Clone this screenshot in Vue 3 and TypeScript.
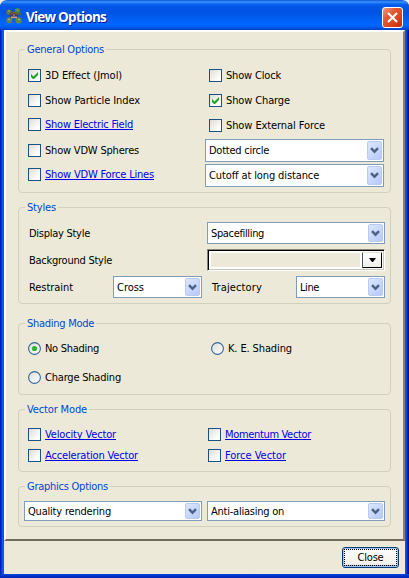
<script setup lang="ts">
import { reactive, ref } from 'vue'

interface Option {
  label: string
  width: number
  checked?: boolean
  link?: boolean
}

const generalLeft = reactive<Option[]>([
  { label: '3D Effect (Jmol)', width: 77, checked: true },
  { label: 'Show Particle Index', width: 95 },
  { label: 'Show Electric Field', width: 88, link: true },
  { label: 'Show VDW Spheres', width: 94 },
  { label: 'Show VDW Force Lines', width: 109, link: true },
])

const generalRight = reactive<Option[]>([
  { label: 'Show Clock', width: 55 },
  { label: 'Show Charge', width: 64, checked: true },
  { label: 'Show External Force', width: 99 },
])

const generalSelects = [
  { label: 'Dotted circle', width: 60 },
  { label: 'Cutoff at long distance', width: 110 },
]

const shading = ref('No Shading')
const shadingModes = [
  { label: 'No Shading', width: 54 },
  { label: 'K. E. Shading', width: 64 },
  { label: 'Charge Shading', width: 76 },
]

const vectors = reactive<Option[]>([
  { label: 'Velocity Vector', width: 71, link: true },
  { label: 'Momentum Vector', width: 86, link: true },
  { label: 'Acceleration Vector', width: 93, link: true },
  { label: 'Force Vector', width: 61, link: true },
])

const graphics = [
  { label: 'Quality rendering', width: 83 },
  { label: 'Anti-aliasing on', width: 73 },
]

// Tracks a label so that it fills the given number of pixels.
const vFit = {
  mounted(el: HTMLElement, binding: { value: number }) {
    const natural = el.getBoundingClientRect().width
    const count = (el.textContent ?? '').length
    if (count > 0) el.style.letterSpacing = `${(binding.value - natural) / count}px`
  },
}
</script>

<template>
  <div class="window">
    <header class="titlebar">
      <svg class="app-icon" width="16" height="16" viewBox="0 0 16 16">
        <path d="M3 3L13 12M13 3L3 12" stroke="#496b37" stroke-width="3.5" />
        <circle cx="2.8" cy="4.2" r="2.6" fill="#67763c" />
        <circle cx="11.5" cy="2.7" r="2.7" fill="#4e8a3c" />
        <circle cx="3.3" cy="12.2" r="2.9" fill="#668842" />
        <circle cx="12.6" cy="12.4" r="3.1" fill="#648b45" />
        <circle cx="14" cy="6" r="1.8" fill="#376c42" />
        <path d="M3.5 8.5Q3.5 4 8 4Q12 4 12 8.5L11 10H5Z" fill="#4b3565" />
        <path d="M5 6.5L8 4L11 6.5" stroke="#a7643c" fill="none" />
        <path d="M5 9.3H11" stroke="#c0a29d" stroke-width="1.5" />
        <path d="M7 7H9M2 3H4M12 11.5H14M2 11.5H4M11 2H12" stroke="#a2b96b" />
      </svg>
      <h1 class="title"><span v-fit="80">View Options</span></h1>
      <button class="close-x" aria-label="Close window">
        <svg width="19" height="19" viewBox="0 0 19 19">
          <path d="M5 5L14 14M14 5L5 14" stroke="#fff" stroke-width="2.2" />
        </svg>
      </button>
    </header>

    <main class="pane">
      <section class="group general">
        <h2 class="legend"><span v-fit="77">General Options</span></h2>
        <div class="column left">
          <div v-for="o in generalLeft" :key="o.label" class="option" :class="{ raised: o.link }" @click="o.checked = !o.checked">
            <span class="box"><svg v-if="o.checked" width="9" height="9" viewBox="0 0 9 9"><path d="M1 3V6L3 8H4L8 4V1L3.5 5.5Z" fill="#21a121" /></svg></span>
            <span v-fit="o.width" class="text" :class="{ link: o.link }">{{ o.label }}</span>
          </div>
        </div>
        <div class="column right">
          <div v-for="o in generalRight" :key="o.label" class="option" @click="o.checked = !o.checked">
            <span class="box"><svg v-if="o.checked" width="9" height="9" viewBox="0 0 9 9"><path d="M1 3V6L3 8H4L8 4V1L3.5 5.5Z" fill="#21a121" /></svg></span>
            <span v-fit="o.width" class="text">{{ o.label }}</span>
          </div>
          <div class="stack">
            <div v-for="s in generalSelects" :key="s.label" class="select">
              <span v-fit="s.width" class="text">{{ s.label }}</span>
              <span class="arrow"><svg width="9" height="7" viewBox="0 0 9 7"><path d="M1 1.2L4.5 4.7L8 1.2" /></svg></span>
            </div>
          </div>
        </div>
      </section>

      <section class="group styles">
        <h2 class="legend"><span v-fit="29">Styles</span></h2>
        <div class="line">
          <span class="label"><span v-fit="61" class="text">Display Style</span></span>
          <div class="select wide">
            <span v-fit="53" class="text">Spacefilling</span>
            <span class="arrow"><svg width="9" height="7" viewBox="0 0 9 7"><path d="M1 1.2L4.5 4.7L8 1.2" /></svg></span>
          </div>
        </div>
        <div class="line">
          <span class="label"><span v-fit="83" class="text">Background Style</span></span>
          <div class="swatch">
            <span class="fill"></span>
            <span class="drop"><svg width="7" height="4" viewBox="0 0 7 4"><path d="M0 0H7L4 4H3Z" fill="#000" /></svg></span>
          </div>
        </div>
        <div class="line">
          <span class="label short"><span v-fit="44" class="text">Restraint</span></span>
          <div class="select narrow">
            <span v-fit="27" class="text">Cross</span>
            <span class="arrow"><svg width="9" height="7" viewBox="0 0 9 7"><path d="M1 1.2L4.5 4.7L8 1.2" /></svg></span>
          </div>
          <span class="label second"><span v-fit="50" class="text">Trajectory</span></span>
          <div class="select narrow">
            <span v-fit="19" class="text">Line</span>
            <span class="arrow"><svg width="9" height="7" viewBox="0 0 9 7"><path d="M1 1.2L4.5 4.7L8 1.2" /></svg></span>
          </div>
        </div>
      </section>

      <section class="group shading">
        <h2 class="legend"><span v-fit="67">Shading Mode</span></h2>
        <div v-for="m in shadingModes" :key="m.label" class="option" @click="shading = m.label">
          <svg class="radio" width="13" height="13" viewBox="0 0 13 13">
            <defs>
              <linearGradient id="radio-face" x1="0" y1="0" x2="1" y2="1">
                <stop offset="0" stop-color="#dcdcd7" />
                <stop offset="1" stop-color="#fff" />
              </linearGradient>
            </defs>
            <circle cx="6.5" cy="6.5" r="5.9" fill="url(#radio-face)" stroke="#336699" stroke-width="1.1" />
            <circle v-if="shading === m.label" cx="6.5" cy="6.5" r="2.6" fill="#2fb52f" />
          </svg>
          <span v-fit="m.width" class="text">{{ m.label }}</span>
        </div>
      </section>

      <section class="group vector">
        <h2 class="legend"><span v-fit="60">Vector Mode</span></h2>
        <div v-for="o in vectors" :key="o.label" class="option" @click="o.checked = !o.checked">
          <span class="box"><svg v-if="o.checked" width="9" height="9" viewBox="0 0 9 9"><path d="M1 3V6L3 8H4L8 4V1L3.5 5.5Z" fill="#21a121" /></svg></span>
          <span v-fit="o.width" class="text link">{{ o.label }}</span>
        </div>
      </section>

      <section class="group graphics">
        <h2 class="legend"><span v-fit="81">Graphics Options</span></h2>
        <div v-for="s in graphics" :key="s.label" class="select">
          <span v-fit="s.width" class="text">{{ s.label }}</span>
          <span class="arrow"><svg width="9" height="7" viewBox="0 0 9 7"><path d="M1 1.2L4.5 4.7L8 1.2" /></svg></span>
        </div>
      </section>
    </main>

    <footer class="footer">
      <button class="close"><span class="focus"><span v-fit="26" class="text">Close</span></span></button>
    </footer>
  </div>
</template>

<style>
body {
  background: #f3f1e3;
  overflow: hidden;
}
</style>

<style scoped>
* {
  box-sizing: border-box;
}
.window {
  width: 409px;
  height: 578px;
  display: flex;
  flex-direction: column;
  padding: 0 4px 4px;
  border-radius: 7px 7px 0 0;
  background:
    linear-gradient(#0046e0, #001fb0) bottom / 100% 4px no-repeat,
    linear-gradient(to right, #001cbe 0 1px, #003ad8 1px 2px, #0a5cf0 2px 3px, #0c54e6 3px 4px, transparent 4px calc(100% - 4px), #0a54ea calc(100% - 4px) calc(100% - 3px), #0042dc calc(100% - 3px) calc(100% - 2px), #0022b4 calc(100% - 2px) calc(100% - 1px), #00138c calc(100% - 1px));
  font-family: 'DejaVu Sans Condensed', 'DejaVu Sans', sans-serif;
  font-stretch: condensed;
  font-size: 11px;
  line-height: 13px;
  color: #000;
}
.titlebar {
  height: 30px;
  flex: none;
  margin: 0 -4px;
  padding: 1px 6px 0 6px;
  display: flex;
  align-items: center;
  border-radius: 7px 7px 0 0;
  background: linear-gradient(#0b56d5 0, #3a92ff 2px, #0a63ee 4px, #0055e5 7px, #0055e5 14px, #0062fa 21px, #0066ff 25px, #005cf2 27px, #0040c0 30px);
}
.app-icon {
  flex: none;
}
.title {
  flex: 1;
  margin: 2px 0 0 4px;
  font: bold 13.5px/18px 'Open Sans', 'Noto Sans', sans-serif;
  font-stretch: normal;
  color: #fff;
  text-shadow: 1px 1px #0a1883;
  white-space: nowrap;
}
.close-x {
  width: 21px;
  height: 21px;
  margin-top: 3px;
  padding: 0;
  display: flex;
  border: 1px solid #fff;
  border-radius: 3px;
  background: linear-gradient(135deg, #ee9b82, #e25a35 35%, #d9421b 70%, #b5300d);
}
.pane {
  height: 511px;
  flex: none;
  padding: 17px 11px 0 12px;
  border-style: solid;
  border-width: 2px;
  border-color: #fff #858275 #6f6c60 #fff;
  background: #ece9d8;
}
.group {
  width: 373px;
  border: 1px solid #d0d0bf;
  border-radius: 4px;
}
.legend {
  width: max-content;
  height: 14px;
  margin: -7px 0 0 6px;
  padding: 0 2px;
  font-size: 11px;
  font-weight: normal;
  line-height: 14px;
  color: #0046d5;
  background: #ece9d8;
  white-space: nowrap;
}
.text {
  white-space: nowrap;
}
.general {
  height: 144px;
  display: grid;
  grid-template-columns: 186px 179px;
  grid-template-rows: 7px 125px;
  row-gap: 6px;
}
.general .legend {
  grid-column: 1 / 3;
}
.option {
  display: flex;
  align-items: center;
  gap: 4px;
}
.column .option {
  height: 25px;
}
.left .option {
  padding-left: 9px;
}
.right .option {
  padding-left: 4px;
}
.column .raised {
  padding-bottom: 2px;
}
.box {
  width: 13px;
  height: 13px;
  flex: none;
  padding: 1px;
  display: flex;
  border: 1px solid #1c5180;
  background: linear-gradient(135deg, #dcdcd7, #fff 80%);
}
.link {
  color: #0000ee;
  text-decoration: underline 1px;
  text-underline-offset: 1px;
  text-decoration-skip-ink: none;
}
.stack {
  padding-top: 1px;
  display: flex;
  flex-direction: column;
  gap: 2px;
}
.select {
  height: 22px;
  display: flex;
  align-items: center;
  justify-content: space-between;
  padding: 1px 1px 1px 3px;
  border: 1px solid #7f9db9;
  background: #fff;
}
.stack .select {
  height: 23px;
}
.arrow {
  width: 15px;
  height: 100%;
  display: flex;
  align-items: center;
  justify-content: center;
  border: 1px solid #b9cbf3;
  border-radius: 2px;
  background: linear-gradient(135deg, #dce7ff, #b5c9fa);
}
.arrow path {
  fill: none;
  stroke: #4d6185;
  stroke-width: 2.4;
}
.styles {
  height: 97px;
  margin-top: 14px;
}
.styles .legend {
  margin-bottom: 7px;
}
.line {
  height: 22px;
  margin-bottom: 5px;
  padding-left: 10px;
  display: flex;
  align-items: center;
}
.label {
  width: 178px;
  display: flex;
}
.label.short {
  width: 84px;
}
.label.second {
  width: 94px;
  padding-left: 10px;
}
.select.wide {
  width: 178px;
}
.select.narrow {
  width: 89px;
}
.swatch {
  width: 178px;
  height: 22px;
  padding: 2px;
  display: flex;
  border: 1px solid;
  border-color: #86837a #fff #fff #86837a;
  box-shadow: inset 1px 1px #000, inset -1px -1px #c9c6ba;
  background: #fff;
}
.fill {
  flex: 1;
  margin: 1px 2px 1px 1px;
  background: #ece9d8;
}
.drop {
  width: 20px;
  display: flex;
  align-items: center;
  justify-content: center;
  border: 1px solid;
  border-color: #e5e3d8 #000 #000 #555;
  border-radius: 1px;
  background: linear-gradient(#fff, #efeee8);
}
.shading {
  height: 72px;
  margin-top: 19px;
  display: grid;
  grid-template-columns: 183px 180px;
  grid-template-rows: 7px 28px 29px;
  padding-left: 9px;
}
.shading .legend {
  grid-column: 1 / 3;
  margin-left: -3px;
}
.shading .option {
  padding-top: 6px;
}
.shading .option:last-child {
  padding-top: 7px;
}
.radio {
  flex: none;
}
.vector {
  height: 63px;
  margin-top: 14px;
  padding-left: 9px;
  display: grid;
  grid-template-columns: 180px 180px;
  grid-template-rows: 14px 21px 21px;
}
.vector .legend {
  grid-column: 1 / 3;
  margin-left: -3px;
}
.graphics {
  height: 41px;
  margin-top: 14px;
  padding-left: 5px;
  display: grid;
  grid-template-columns: 178px 178px;
  grid-template-rows: 7px 20px;
  gap: 7px 5px;
}
.graphics .legend {
  grid-column: 1 / 3;
  margin-left: 1px;
}
.graphics .select {
  height: 20px;
}
.footer {
  flex: 1;
  display: flex;
  justify-content: flex-end;
  padding: 6px 6px 0 0;
  background: #ece9d8;
}
.close {
  width: 57px;
  height: 21px;
  padding: 0;
  border: 1px solid #003c74;
  border-radius: 3px;
  box-shadow: inset 0 0 0 1px #a3bff0, inset 0 -2px #87a5e2;
  background: linear-gradient(#fff, #f3f2eb 80%, #dfddd2);
  font: inherit;
  color: #000;
}
.focus {
  height: 17px;
  margin: 1px;
  display: flex;
  align-items: center;
  justify-content: center;
  border: 1px dotted #000;
}
</style>
